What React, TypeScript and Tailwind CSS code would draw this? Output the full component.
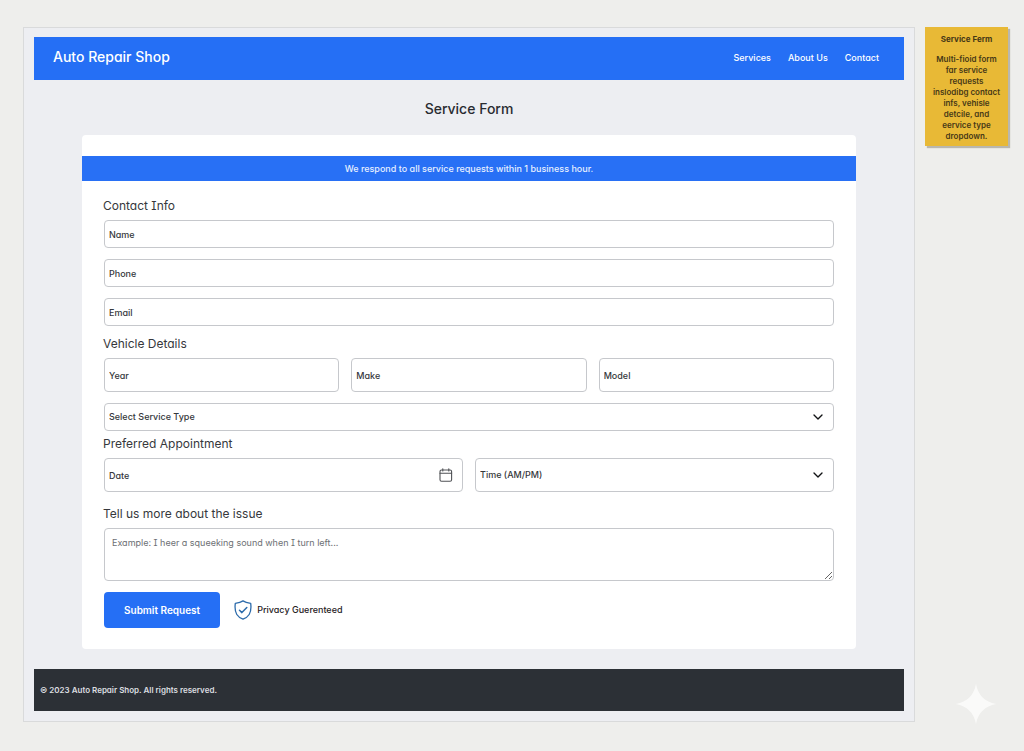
import { useState } from 'react';
import type { ReactNode } from 'react';
import { ChevronDown } from 'lucide-react';

const navLinks = [
  { label: 'Services', href: '#services' },
  { label: 'About Us', href: '#about' },
  { label: 'Contact', href: '#contact' },
];

const contactFields = [
  { id: 'name', label: 'Name', type: 'text' },
  { id: 'phone', label: 'Phone', type: 'tel' },
  { id: 'email', label: 'Email', type: 'email' },
];

const vehicleFields = [
  { id: 'year', label: 'Year' },
  { id: 'make', label: 'Make' },
  { id: 'model', label: 'Model' },
];

const fieldClass =
  'block w-full rounded border border-[#c6c8cc] bg-white px-1 text-[9px] font-medium text-[#36383c] placeholder:text-[#36383c] placeholder:opacity-100 outline-none focus:border-[#256ff5]';

function SectionTitle({ children, className }: { children: ReactNode; className: string }) {
  return (
    <h2 className={`-ml-px mb-1.5 text-[12px] leading-4 text-[#36383c] ${className}`}>{children}</h2>
  );
}

function SelectField({
  id,
  label,
  options,
  className,
}: {
  id: string;
  label: string;
  options: string[];
  className: string;
}) {
  const [value, setValue] = useState('');

  return (
    <div className="relative">
      <select
        id={id}
        aria-label={label}
        value={value}
        onChange={(e) => setValue(e.target.value)}
        className={`${fieldClass} appearance-none ${className}`}
      >
        <option value="">{label}</option>
        {options.map((option) => (
          <option key={option} value={option}>{option}</option>
        ))}
      </select>
      <ChevronDown className="pointer-events-none absolute top-1/2 right-2 size-4 -translate-y-1/2 text-[#111315]" />
    </div>
  );
}

function CalendarIcon() {
  return (
    <svg
      viewBox="0 0 14 14"
      className="pointer-events-none absolute top-1/2 right-2.5 size-3.5 -translate-y-1/2 text-[#505256]"
      fill="none"
      stroke="currentColor"
      strokeWidth="1.1"
      strokeLinecap="round"
    >
      <rect x="1" y="2" width="11.6" height="11.3" rx="1.5" />
      <path d="M1 5.300h11.600M3.800 .7v2.300M9.800 .7v2.300" />
    </svg>
  );
}

function ShieldIcon() {
  return (
    <svg viewBox="0 0 18 20" className="h-5 w-[18px]" fill="none" stroke="#2c6bab" strokeLinecap="round" strokeLinejoin="round">
      <path strokeWidth="1.3" d="M9 .9C6.800 2.500 4.200 3 1.300 3.300c-.5 4-.5 8 1.500 11.200C4.200 16.700 6.400 18.200 9 19.200c2.600-1 4.800-2.500 6.200-4.700 2-3.200 2-7.200 1.500-11.200C13.800 3 11.200 2.500 9 .9z" />
      <path strokeWidth="1.5" d="M5.500 10.300l2.400 2.300 4.900-5" />
    </svg>
  );
}

export default function App() {
  return (
    <div className="relative flex min-h-screen items-start gap-2.5 bg-[#eeeeec] pt-[27px] pr-4 pb-[30px] pl-[23px] font-['Inter','Liberation_Sans',sans-serif] [font-feature-settings:'cv11','cv08']">
      <div className="min-w-0 flex-1 border border-[#d9dadb] bg-[#edeef2] p-2.5 pt-[9px]">
        {/* Header */}
        <header className="flex h-[43px] items-center justify-between bg-[#256ff5] pr-[25px] pb-1 pl-[19px] text-white">
          <span className="text-[14px] font-medium">Auto Repair Shop</span>
          <nav className="flex items-center gap-[17px] pt-0.5 text-[9px] font-medium">
            {navLinks.map((link) => (
              <a key={link.label} href={link.href}>{link.label}</a>
            ))}
          </nav>
        </header>

        <main className="px-12">
          <h1 className="mt-[19px] text-center text-[14px] leading-5 font-medium text-[#292b30]">Service Form</h1>

          {/* Form card */}
          <div className="mt-4 rounded bg-white py-[21px]">
            <p className="bg-[#2870f5] text-center text-[9px] leading-[25px] font-medium text-[#e6efff]">
              We respond to all service requests within 1 business hour.
            </p>

            <form className="px-[22px]" onSubmit={(e) => e.preventDefault()}>
              <SectionTitle className="mt-[17px]">Contact Info</SectionTitle>
              <div className="flex flex-col gap-[11px]">
                {contactFields.map((field) => (
                  <input
                    key={field.id}
                    id={field.id}
                    type={field.type}
                    aria-label={field.label}
                    placeholder={field.label}
                    className={`${fieldClass} h-7`}
                  />
                ))}
              </div>

              <SectionTitle className="mt-2.5">Vehicle Details</SectionTitle>
              <div className="mb-[11px] grid grid-cols-3 gap-3">
                {vehicleFields.map((field) => (
                  <input
                    key={field.id}
                    id={field.id}
                    type="text"
                    aria-label={field.label}
                    placeholder={field.label}
                    className={`${fieldClass} h-[34px]`}
                  />
                ))}
              </div>
              <SelectField
                id="service-type"
                label="Select Service Type"
                options={['Oil Change', 'Brakes', 'Engine', 'Tires']}
                className="h-7"
              />

              <SectionTitle className="mt-[5px]">Preferred Appointment</SectionTitle>
              <div className="grid grid-cols-2 gap-3">
                <div className="relative">
                  <input id="date" type="text" aria-label="Date" placeholder="Date" className={`${fieldClass} h-[34px]`} />
                  <CalendarIcon />
                </div>
                <SelectField id="time" label="Time (AM/PM)" options={['AM', 'PM']} className="h-[34px]" />
              </div>

              <SectionTitle className="mt-3.5">
                <label htmlFor="issue">Tell us more about the issue</label>
              </SectionTitle>
              <textarea
                id="issue"
                placeholder="Example: I heer a squeeking sound when I turn left..."
                className="block h-[53px] w-full resize-y rounded border border-[#c6c8cc] bg-white px-[7px] py-[7px] text-[9px] leading-[14px] outline-none placeholder:text-[#6d7074] placeholder:opacity-100 focus:border-[#256ff5]"
              />

              <div className="mt-[11px] flex items-center">
                <button type="submit" className="h-9 rounded bg-[#256ff5] px-5 text-[10px] font-semibold text-white">
                  Submit Request
                </button>
                <span className="ml-3.5 flex items-center gap-[5px] text-[9px] font-medium text-[#1f2124]">
                  <ShieldIcon />
                  Privacy Guerenteed
                </span>
              </div>
            </form>
          </div>
        </main>

        <footer className="mt-5 bg-[#2c3036] px-1.5 text-[8px] leading-[42px] font-semibold text-[#dcdee0]">
          © 2023 Auto Repair Shop. All rights reserved.
        </footer>
      </div>

      {/* Sticky note */}
      <aside className="w-[83px] shrink-0 bg-[#e8b936] px-1 pt-[7px] pb-1 text-center text-[8px] leading-[11px] font-semibold text-[#463816] shadow-[2px_2px_1px_#b9b7ae]">
        <h2 className="mb-[9px] font-bold">Service Ferm</h2>
        <p>
          Multi-fioid form<br />
          far service<br />
          requests<br />
          inslodibg contact<br />
          infs, vehisle<br />
          detcile, and<br />
          eervice type<br />
          dropdown.
        </p>
      </aside>

      <svg viewBox="0 0 40 40" className="absolute right-7 bottom-7 size-10" fill="#fafaf9">
        <path d="M20 0c2 11 9 18 20 20-11 2-18 9-20 20-2-11-9-18-20-20C11 18 18 11 20 0z" />
      </svg>
    </div>
  );
}
